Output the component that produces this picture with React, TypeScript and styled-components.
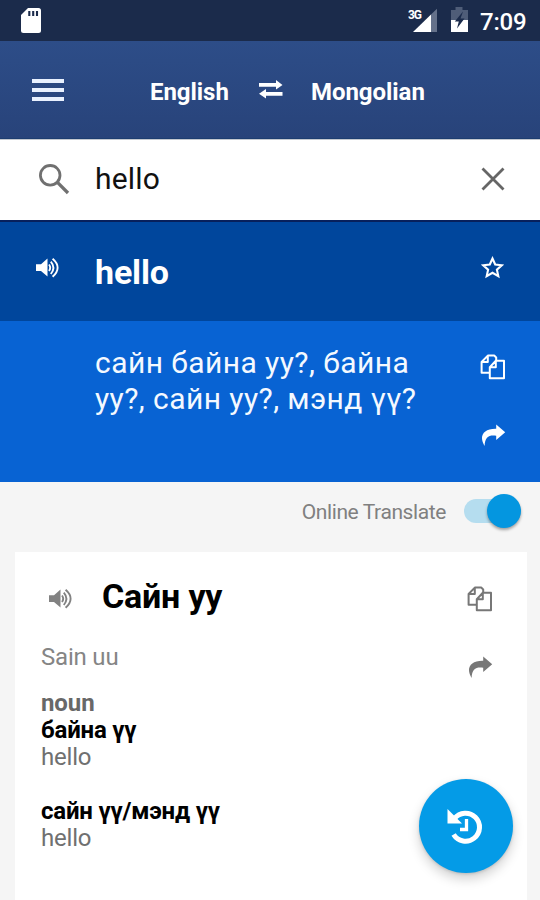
import React from 'react';
import styled, { createGlobalStyle } from 'styled-components';

const GlobalStyle = createGlobalStyle`
  * { box-sizing: border-box; }
  body {
    margin: 0;
    background: #f5f5f5;
    font-family: Roboto, "Noto Sans", sans-serif;
    overflow: hidden;
  }
  svg { display: block; flex: none; }
`;

const Screen = styled.main`
  width: 540px;
  height: 900px;
  display: flex;
  flex-direction: column;
  overflow: hidden;
  position: relative;
`;

const StatusBar = styled.div`
  flex: none;
  height: 41px;
  background: #1b2b4b;
  display: flex;
  align-items: flex-start;
  padding: 7px 13px 0 20px;
`;

const StatusIcons = styled.div`
  margin-left: auto;
  display: flex;
`;

const Clock = styled.time`
  margin: 1px 0 0 12px;
  width: 47px;
  font-size: 24px;
  font-weight: 500;
  line-height: 29px;
  letter-spacing: -0.2px;
  white-space: nowrap;
  color: #fff;
`;

const Header = styled.header`
  flex: none;
  height: 98px;
  background: linear-gradient(#2d4d88, #28437a);
  border-bottom: 1px solid #1d3d70;
  display: flex;
  align-items: center;
  padding-left: 32px;
`;

const IconButton = styled.button<{ $color?: string }>`
  padding: 0;
  border: 0;
  background: none;
  color: ${(p) => p.$color ?? '#fff'};
  flex: none;
`;

const Languages = styled.nav`
  display: flex;
  align-items: center;
  margin: 4px 0 0 86px;
`;

const Language = styled.span<{ $width: number }>`
  width: ${(p) => p.$width}px;
  font-size: 24px;
  font-weight: 700;
  line-height: 32px;
  letter-spacing: -0.05px;
  color: #fff;
`;

const Swap = styled(IconButton)`
  margin: -4px 28px 0 28px;
`;

const SearchBar = styled.label`
  flex: none;
  height: 83px;
  background: #fff;
  border-top: 1px solid #c3c8d0;
  border-bottom: 2px solid #07205c;
  display: flex;
  align-items: center;
  padding: 0 35px 2px 38px;
`;

const Query = styled.span`
  flex: 1;
  margin-left: 25px;
  font-size: 30px;
  line-height: 40px;
  letter-spacing: 0.2px;
  color: #111;
`;

const WordRow = styled.section`
  flex: none;
  height: 99px;
  background: #00469c;
  display: flex;
  align-items: center;
  padding: 0 36px 8px 36px;
`;

const Headword = styled.h1`
  flex: 1;
  margin: 8px 0 0 35px;
  font-size: 34px;
  line-height: 40px;
  font-weight: 700;
  letter-spacing: -0.15px;
  color: #fff;
`;

const TranslationRow = styled.section`
  flex: none;
  height: 161px;
  background: #0863d3;
  display: flex;
  padding: 24px 34px 0 95px;
`;

const Translation = styled.p`
  flex: 1;
  margin: 0;
  font-size: 30px;
  line-height: 36px;
  letter-spacing: 0.43px;
  white-space: nowrap;
  color: #f4f9ff;
`;

const Actions = styled.div<{ $top: number }>`
  display: flex;
  flex-direction: column;
  gap: 44px;
  padding-top: ${(p) => p.$top}px;
`;

const OnlineRow = styled.div`
  flex: none;
  height: 70px;
  display: flex;
  justify-content: flex-end;
  align-items: flex-start;
  padding: 11px 19px 0 0;
`;

const OnlineLabel = styled.span`
  margin: 1px 18px 0 0;
  font-size: 21px;
  line-height: 37px;
  letter-spacing: -0.4px;
  color: #808080;
`;

const Track = styled.span`
  display: flex;
  justify-content: flex-end;
  align-items: center;
  width: 57px;
  height: 24px;
  margin-top: 6px;
  border-radius: 12px;
  background: #b5ddef;
`;

const Thumb = styled.span`
  width: 34px;
  height: 34px;
  border-radius: 50%;
  background: #0496e0;
  box-shadow: 0 2px 3px rgba(0, 0, 0, 0.35);
`;

const Card = styled.article`
  flex: 1;
  margin: 0 13px 0 15px;
  background: #fff;
  display: flex;
  justify-content: space-between;
  padding: 24px 34px 0 26px;
`;

const CardTitleRow = styled.div`
  display: flex;
  align-items: center;
  padding-left: 8px;
`;

const CardSound = styled(IconButton)`
  margin-top: 5px;
`;

const CardTitle = styled.h2`
  margin: 0 0 0 29px;
  font-size: 34px;
  line-height: 40px;
  letter-spacing: -0.2px;
  font-weight: 700;
  color: #000;
`;

const Line = styled.p<{ $tone?: 'label' | 'strong' }>`
  margin: 0;
  font-size: 24px;
  line-height: 27px;
  letter-spacing: ${(p) => (p.$tone === 'label' ? -0.1 : -0.2)}px;
  font-weight: ${(p) => (p.$tone ? 700 : 400)};
  color: ${(p) => (p.$tone === 'strong' ? '#000' : p.$tone === 'label' ? '#686868' : '#707070')};
`;

const Romanized = styled(Line)`
  margin: 28px 0 19px;
  color: #858585;
`;

const Sense = styled.div`
  margin-bottom: 27px;
`;

const HistoryFab = styled.button`
  position: absolute;
  right: 27px;
  bottom: 27px;
  width: 94px;
  height: 94px;
  border: 0;
  border-radius: 50%;
  background: #049be7;
  box-shadow: 0 6px 12px rgba(0, 0, 0, 0.18), 0 1px 3px rgba(0, 0, 0, 0.15);
  display: flex;
  align-items: center;
  justify-content: center;
  padding: 0 3px 0 0;
`;

const SoundIcon = () => (
  <svg width="24" height="22" viewBox="0 0 24 22" fill="none">
    <path d="M0 7.3h5L11.5 1.5v18L5 14H0z" fill="currentColor" />
    <path d="M13 7.5q2.4 3.2 0 6.5M14.8 4.6q5.2 6 0 12.4M16.6 1.8q10 8.7 0 18" stroke="currentColor" strokeWidth="1.9" />
  </svg>
);

const CopyIcon = () => (
  <svg width="26" height="26" viewBox="0 0 26 26" fill="none" stroke="currentColor" strokeWidth="2" strokeLinejoin="round">
    <path d="M9.5 18.7H1.6V8L7.8 1.6h6.4L16.2 3.4V6.6M7.8 2v6H2" />
    <path d="M15.8 6.8H24v17.4H9.8v-11zM15.8 6.8v6.4h-6" />
  </svg>
);

const ForwardIcon = () => (
  <svg width="26" height="24" viewBox="0 0 26 24" fill="currentColor">
    <path d="M16.2 0.5l9 7.8-9 7.7v-4.3C9 10.8 5 12.6 4.6 22-1.2 12.8 2.6 4.4 16.2 4.7z" />
  </svg>
);

export default function App() {
  return (
    <Screen>
      <GlobalStyle />
      <StatusBar>
        <svg width="22" height="27" viewBox="0 0 22 27">
          <path d="M8 1h10.5Q21 1 21 3.5v20q0 2.5-2.5 2.5h-15Q1 26 1 23.5V8z" fill="#fff" />
          <path d="M9.3 4v5M13.2 4v5M17 4v5" stroke="#1b2b4b" strokeWidth="2.1" />
        </svg>
        <StatusIcons>
          <svg width="60" height="27" viewBox="0 0 60 27">
            <text x="0" y="11.5" fill="#fff" fontSize="12" fontWeight="700" textLength="14">3G</text>
            <path d="M23 7.5V25H5z" fill="#fff" />
            <path d="M23 7.5L29 1.8V25h-6z" fill="#65718a" />
            <path d="M43 3h4.5V0h7v3H60v11H43z" fill="#4f5d78" />
            <path d="M43 13h17v12H43z" fill="#fff" />
            <path d="M55 4.5L46.8 14.5h4l-1.8 7L56.5 11.5h-4z" fill="#1b2b4b" />
          </svg>
        </StatusIcons>
        <Clock>7:09</Clock>
      </StatusBar>

      <Header>
        <IconButton aria-label="Menu">
          <svg width="32" height="24" viewBox="0 0 32 24" fill="#e9f1ff">
            <path d="M0 1h32v4H0zM0 10h32v4H0zM0 19h32v4H0z" />
          </svg>
        </IconButton>
        <Languages>
          <Language $width={80}>English</Language>
          <Swap aria-label="Swap languages">
            <svg width="25" height="19" viewBox="0 0 25 19" fill="currentColor">
              <path d="M1 3h17V0l6.5 4.9-6.5 4.6V6.8H1z" />
              <path d="M24.5 12.1H8V9l-7 4.8 7 4.7v-2.7h16.5z" />
            </svg>
          </Swap>
          <Language $width={114}>Mongolian</Language>
        </Languages>
      </Header>

      <SearchBar>
        <svg width="32" height="32" viewBox="0 0 32 32" fill="none" stroke="#707070" strokeWidth="2.8">
          <circle cx="12.2" cy="12.3" r="9.8" />
          <path d="M19.2 19.2L30 30" strokeWidth="3.3" />
        </svg>
        <Query>hello</Query>
        <svg width="24" height="24" viewBox="0 0 24 24" fill="none" stroke="#666" strokeWidth="2.8">
          <path d="M1.5 1.5l21 21M22.5 1.5l-21 21" />
        </svg>
      </SearchBar>

      <WordRow>
        <IconButton aria-label="Listen"><SoundIcon /></IconButton>
        <Headword>hello</Headword>
        <IconButton aria-label="Favourite">
          <svg width="23" height="23" viewBox="0 0 23 23" fill="none" stroke="currentColor" strokeWidth="2.1">
            <path d="M11.5 2.5l2.7 6 6.6.7-4.9 4.4 1.4 6.5-5.8-3.3-5.8 3.3 1.4-6.5-4.9-4.4 6.6-.7z" />
          </svg>
        </IconButton>
      </WordRow>

      <TranslationRow>
        <Translation>
          сайн байна уу?, байна
          <br />
          уу?, сайн уу?, мэнд үү?
        </Translation>
        <Actions $top={9}>
          <IconButton aria-label="Copy"><CopyIcon /></IconButton>
          <IconButton aria-label="Share"><ForwardIcon /></IconButton>
        </Actions>
      </TranslationRow>

      <OnlineRow>
        <OnlineLabel>Online Translate</OnlineLabel>
        <Track><Thumb /></Track>
      </OnlineRow>

      <Card>
        <div>
          <CardTitleRow>
            <CardSound $color="#828282" aria-label="Listen"><SoundIcon /></CardSound>
            <CardTitle>Сайн уу</CardTitle>
          </CardTitleRow>
          <Romanized>Sain uu</Romanized>
          <Sense>
            <Line $tone="label">noun</Line>
            <Line $tone="strong">байна үү</Line>
            <Line>hello</Line>
          </Sense>
          <Sense>
            <Line $tone="strong">сайн үү/мэнд үү</Line>
            <Line>hello</Line>
          </Sense>
        </div>
        <Actions $top={10}>
          <IconButton $color="#777" aria-label="Copy"><CopyIcon /></IconButton>
          <IconButton $color="#777" aria-label="Share"><ForwardIcon /></IconButton>
        </Actions>
      </Card>

      <HistoryFab aria-label="History">
        <svg width="38" height="38" viewBox="0 0 38 38" fill="none" stroke="#fff">
          <path d="M8.5 11.5A14 14 0 1 1 7.6 27.5" strokeWidth="5" />
          <path d="M1.5 2L16 16.5H1.5z" fill="#fff" stroke="none" />
          <path d="M20.5 12v10.5H14" strokeWidth="3.3" />
        </svg>
      </HistoryFab>
    </Screen>
  );
}
